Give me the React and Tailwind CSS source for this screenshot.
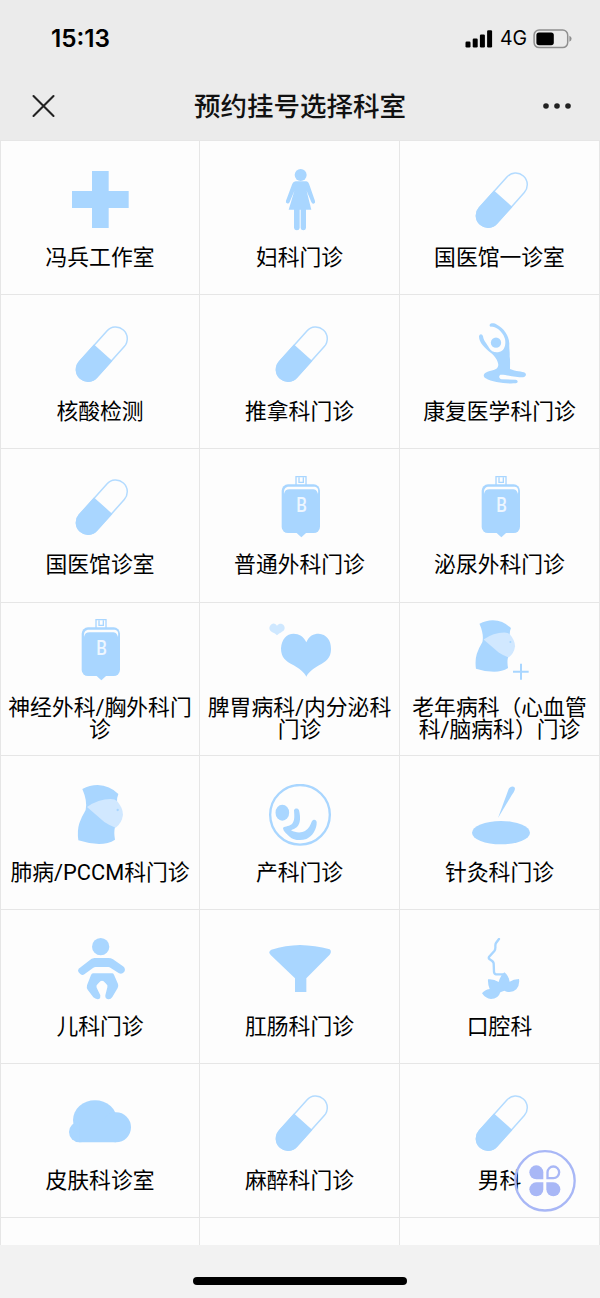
import { clsx } from "clsx";

function Cross() {
  return <path d="M69 6h50v60h60v51h-60v60H69v-60H9V66h60z" />;
}

function Woman() {
  return (
    <>
      <circle cx="95" cy="18" r="18" />
      <path d="M80 37H112Q118 38 120 44L138 96Q140 103 134 104Q129 105 127 99L113 66L127 122H111V177Q110 184 103 184Q96 184 95 177V122H92V177Q91 184 84 184Q76 184 75 177V122H59L76 66L62 99Q60 105 54 103Q49 101 51 95L70 44Q73 38 80 37Z" />
    </>
  );
}

function Pill() {
  return (
    <g transform="translate(98.5 93.5) rotate(-48.2)">
      <rect x="-97" y="-35" width="194" height="70" rx="35" fill="none" stroke="#b3dbff" strokeWidth="4.5" />
      <path d="M6 -37H-62A37 37 0 0 0 -62 37H6Z" />
    </g>
  );
}

function Yoga() {
  return (
    <>
      <circle cx="81" cy="59" r="15.5" />
      <path d="M62 5C66 -1 76 0 84 5C104 16 120 36 121 62C120 76 123 86 122 100C124 112 123 124 123 138C140 146 160 145 168 149C174 154 170 162 162 163C140 163 110 154 94 155C88 159 90 167 98 169L140 170C148 171 148 180 140 181C110 183 70 178 50 166C40 159 44 151 54 147C70 140 86 143 88 126C87 112 76 98 66 90C48 76 30 60 30 40C32 31 40 32 42 40C44 54 54 63 60 74C66 86 78 89 90 87C108 83 111 64 108 48C104 32 92 20 80 14C72 10 60 14 62 5Z" />
    </>
  );
}

function BloodBag() {
  return (
    <>
      <path d="M81 28V2H111V28" fill="none" stroke="#a9d6ff" strokeWidth="4" />
      <path d="M90 4V19H103V4" fill="none" stroke="#a9d6ff" strokeWidth="4" />
      <rect x="38" y="25" width="115" height="146" rx="19" />
      <path d="M82 170H112L97 184Z" />
      <path d="M45 54C44 38 49 32 60 32H134C146 32 149 38 147 54C144 44 140 40 130 40H62C52 40 47 44 45 54Z" fill="#fdfdfd" />
      <text x="98" y="107" fontSize="59" textAnchor="middle" textLength="32" lengthAdjust="spacingAndGlyphs" fill="#eff7ff" className="font-['Roboto',sans-serif] font-medium">
        B
      </text>
    </>
  );
}

function Hearts() {
  return (
    <>
      <path d="M112 70C120 50 134 44 149 44C172 46 186 62 186 90C186 118 170 128 150 139C134 148 118 160 112 173C106 160 90 148 74 139C50 127 36 116 36 88C38 60 52 45 74 44C90 44 104 52 112 70Z" />
      <path d="M24 20C29 14 34 13 39 15C45 17 47 22 47 28C46 36 40 38 35 41C30 43 26 46 24 49C22 46 18 43 13 41C7 38 1 35 1 27C2 20 6 15 11 14C16 13 20 15 24 20Z" fill="#cfe8ff" />
    </>
  );
}

function Belly() {
  return (
    <>
      <path d="M40 15Q62 3 86 3Q122 4 148 30Q143 42 144 54L138 130Q134 145 138 167Q118 180 90 180Q58 179 28 169Q24 140 31 118Q38 98 50 78Q56 52 40 15Z" />
      <path d="M54 69Q88 45 125 45Q138 45 144 51Q162 72 162 92Q159 116 140 131Q124 126 106 114Z" fill="#d1e8ff" />
      <circle cx="146" cy="78" r="3.5" />
    </>
  );
}

function BellyPlus() {
  return (
    <>
      <g transform="translate(-3.6 1) scale(.875)">
        <Belly />
      </g>
      <path d="M156 134V182M132 158H179" stroke="#a9d6ff" strokeWidth="6" />
    </>
  );
}

function Fetus() {
  return (
    <>
      <circle cx="93" cy="92.5" r="89.5" fill="none" stroke="#a9d6ff" strokeWidth="7" />
      <ellipse cx="40" cy="86" rx="20.5" ry="24" />
      <path d="M75 79C77 71 88 72 90 79C95 100 95 118 84 129C78 134 72 136 66 139C80 147 98 147 108 141C120 132 124 124 128 113C133 104 143 107 143 115C144 135 130 158 112 165C92 172 72 167 62 158C52 150 43 142 42 133C44 126 58 129 68 121C78 112 76 96 75 79Z" />
    </>
  );
}

function Needle() {
  return (
    <>
      <ellipse cx="96" cy="146" rx="87" ry="35" />
      <path d="M87 102L119 15C123 6 137 4 138 14C137 22 132 27 128 34Z" />
    </>
  );
}

function Baby() {
  return (
    <>
      <circle cx="95" cy="26" r="26" />
      <path d="M29 92L60 68Q68 60 76 60H118Q126 60 132 64L162 85Q170 91 167 100Q161 110 150 106L124 89Q122 87 118 87H80Q76 87 72 90L46 109Q40 113 34 108L29 103Q25 98 29 92Z" />
      <path d="M72 106H129Q133 106 135 110L147 138Q149 144 146 150L130 177Q124 186 115 183Q108 181 109 172L115 148Q117 142 112 138L104 130Q99 126 94 130L86 138Q80 143 83 149L94 172Q95 181 90 183Q80 185 73 178L56 155Q52 150 54 142L66 111Q68 106 72 106Z" />
    </>
  );
}

function Funnel() {
  return <path d="M7 35Q50 22 93 21Q138 22 182 34Q187 37 185 45L182 50L112 121V162H78V121L5 51L1 45Q0 38 7 35Z" />;
}

function Mouth() {
  return (
    <>
      <path d="M90 3L81 15Q79 18 79 24Q80 34 76 39L60 57Q58 61 62 64Q73 70 74 76L75 101Q75 107 81 109H102" fill="none" stroke="#a9d6ff" strokeWidth="7" strokeLinecap="round" />
      <path d="M106 103Q119 113 122 131Q133 123 150 123Q153 141 142 154Q132 164 113 161L106 158L94 163Q88 183 66 183Q50 182 39 166Q47 155 62 153Q56 139 57 124Q74 122 89 132Q94 113 106 103Z" />
    </>
  );
}

function Cloud() {
  return (
    <>
      <ellipse cx="78" cy="84" rx="66" ry="59" />
      <circle cx="141" cy="106" r="45" />
      <circle cx="31" cy="120" r="31" />
      <path d="M31 90H141V151H31Z" />
    </>
  );
}

const departments = [
  { name: "冯兵工作室", icon: Cross },
  { name: "妇科门诊", icon: Woman },
  { name: "国医馆一诊室", icon: Pill },
  { name: "核酸检测", icon: Pill },
  { name: "推拿科门诊", icon: Pill },
  { name: "康复医学科门诊", icon: Yoga },
  { name: "国医馆诊室", icon: Pill },
  { name: "普通外科门诊", icon: BloodBag },
  { name: "泌尿外科门诊", icon: BloodBag },
  { name: "神经外科/胸外科门诊", icon: BloodBag },
  { name: "脾胃病科/内分泌科门诊", icon: Hearts },
  { name: "老年病科（心血管科/脑病科）门诊", icon: BellyPlus },
  { name: "肺病/PCCM科门诊", icon: Belly },
  { name: "产科门诊", icon: Fetus },
  { name: "针灸科门诊", icon: Needle },
  { name: "儿科门诊", icon: Baby },
  { name: "肛肠科门诊", icon: Funnel },
  { name: "口腔科", icon: Mouth },
  { name: "皮肤科诊室", icon: Cloud },
  { name: "麻醉科门诊", icon: Pill },
  { name: "男科", icon: Pill },
];

function StatusBar() {
  return (
    <div className="flex h-[77px] items-center justify-between pl-[51px] pr-7">
      <span className="text-[24.3px] font-semibold leading-none text-black">15:13</span>
      <div className="flex items-center">
        <svg width="28" height="18" viewBox="0 0 28 18">
          <rect x="0.5" y="11.5" width="5" height="6" rx="1.2" />
          <rect x="7.7" y="8.5" width="5" height="9" rx="1.2" />
          <rect x="14.9" y="4.5" width="5" height="13" rx="1.2" />
          <rect x="22.1" y="0.3" width="5" height="17.2" rx="1.2" />
        </svg>
        <span className="ml-[7px] mt-px w-[27px] text-[19.5px] leading-none text-black">4G</span>
        <svg className="ml-1.5" width="39" height="20" viewBox="0 0 39 20">
          <rect x="1.1" y="1" width="33.6" height="17.6" rx="5" fill="none" stroke="#8f8f8f" strokeWidth="1.5" />
          <rect x="3.4" y="3.4" width="17.4" height="12.8" rx="2.6" />
          <path d="M36.4 6.8Q38.6 8 38.6 9.8T36.4 12.8Z" fill="#8f8f8f" />
        </svg>
      </div>
    </div>
  );
}

function TitleBar() {
  return (
    <div className="flex h-[58px] items-center justify-between px-7">
      <svg width="31" height="30" viewBox="0 0 31 30">
        <path d="M5.5 5L25.5 25M25.5 5L5.5 25" stroke="#222" strokeWidth="2.1" strokeLinecap="round" />
      </svg>
      <h1 className="text-[26.5px] font-medium leading-none text-[#111]">预约挂号选择科室</h1>
      <svg width="31" height="30" viewBox="0 0 31 30">
        <circle cx="5" cy="15" r="2.8" fill="#222" />
        <circle cx="16" cy="15" r="2.8" fill="#222" />
        <circle cx="27" cy="15" r="2.8" fill="#222" />
      </svg>
    </div>
  );
}

function DepartmentCell({ name, icon: Icon, first }) {
  return (
    <div
      className={clsx(
        "flex flex-col items-center justify-center border-b border-r border-[#e6e6e6] px-1.5 pt-0.5",
        first && "border-l"
      )}
    >
      <svg className="h-[62px] w-[62px] shrink-0" viewBox="0 0 186 186" fill="#a9d6ff">
        <Icon />
      </svg>
      <span className="mt-4 text-center text-[21.8px] leading-[21.8px] text-black">{name}</span>
    </div>
  );
}

function FloatingMenu() {
  return (
    <svg className="absolute left-[514px] top-[1150px]" width="62" height="62" viewBox="0 0 186 186" fill="#a8b7f6">
      <circle cx="93" cy="92.5" r="89" fill="none" stroke="#a8b7f6" strokeWidth="7" />
      <path d="M67 46A21 21 0 0 0 67 88H88V67A21 21 0 0 0 67 46Z" />
      <path d="M118 49.5A17.5 17.5 0 0 1 118 84.5H100.5V67A17.5 17.5 0 0 1 118 49.5Z" fill="none" stroke="#a8b7f6" strokeWidth="7" />
      <path d="M67 139A21 21 0 0 1 67 97H88V118A21 21 0 0 1 67 139Z" />
      <path d="M118 139A21 21 0 0 0 118 97H97V118A21 21 0 0 0 118 139Z" />
    </svg>
  );
}

function App() {
  return (
    <div className="relative flex h-[1298px] w-[600px] flex-col overflow-hidden bg-[#f2f2f2] font-['Inter','Noto_Sans_CJK_SC',sans-serif]">
      <header className="h-[140.3px] shrink-0 bg-[#ebebeb]">
        <StatusBar />
        <TitleBar />
      </header>
      <main className="h-[1104.7px] shrink-0 overflow-hidden border-t border-[#e6e6e6] bg-[#fdfdfd] font-['Roboto','Noto_Sans_CJK_SC',sans-serif]">
        <div className="grid auto-rows-[153.8px] grid-cols-3">
          {departments.map((d, i) => (
            <DepartmentCell key={d.name} name={d.name} icon={d.icon} first={i % 3 === 0} />
          ))}
          <div className="border-x border-[#e6e6e6]" />
          <div className="border-r border-[#e6e6e6]" />
          <div className="border-r border-[#e6e6e6]" />
        </div>
      </main>
      <footer className="flex flex-1 items-end justify-center pb-[13px]">
        <div className="h-2 w-[214px] rounded-full bg-black" />
      </footer>
      <FloatingMenu />
    </div>
  );
}

export default App;
